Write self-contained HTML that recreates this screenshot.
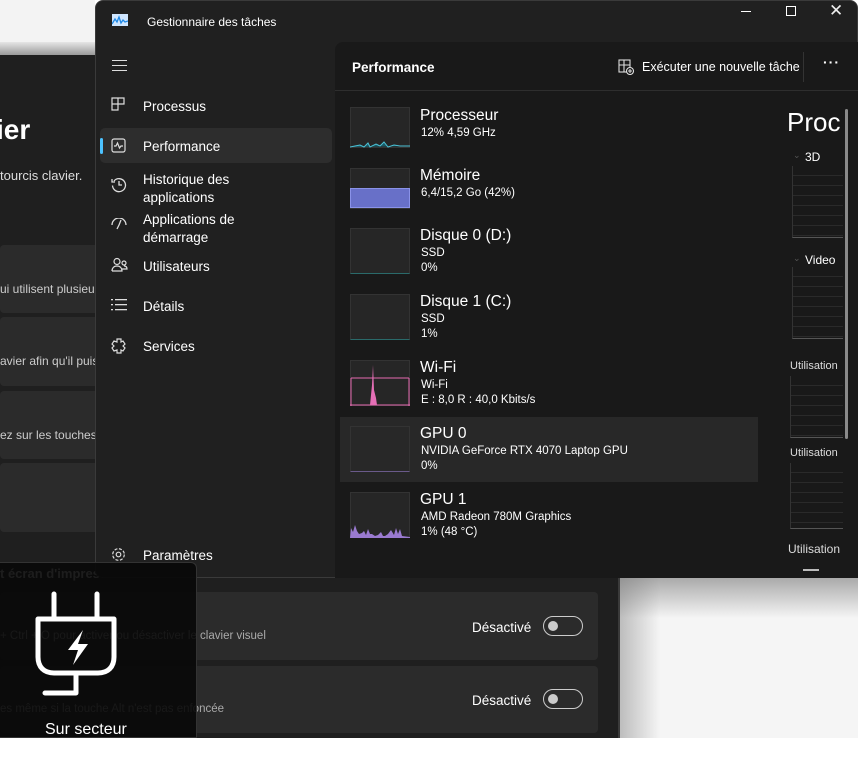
<!DOCTYPE html>
<html><head><meta charset="utf-8"><style>
*{margin:0;padding:0;box-sizing:border-box}
body{width:858px;height:783px;overflow:hidden;background:#fff;font-family:"Segoe UI","Liberation Sans",sans-serif;color:#fff;position:relative}
.abs{position:absolute}
.set{left:0;top:55px;width:620px;height:683px;background:#1f1f1f;border-right:2px solid #3a3a3a}
.card{position:absolute;left:0;background:#2b2b2b;border-radius:4px}
.t{position:absolute;white-space:nowrap}
.tm{left:95px;top:0;width:763px;height:578px;background:#202020;border-radius:8px;border:1px solid #3a3a3a}
.panel{left:335px;top:42px;width:523px;height:536px;background:#191919;border-top-left-radius:8px}
.nav{position:absolute;left:47px;font-size:13.5px;color:#fff}
.ic{position:absolute;left:15px}
.g{position:absolute;left:350px;width:60px;background:#262626;border:1px solid #333}
.name{position:absolute;left:420px;font-size:15.5px}
.sub{position:absolute;left:421px;font-size:11.5px;line-height:15px}
.tog{position:absolute;width:40px;height:20px;border:1px solid #ccc;border-radius:10px}
.tog::after{content:"";position:absolute;left:4px;top:4px;width:10px;height:10px;border-radius:50%;background:#ccc}
.grid{position:absolute;border-left:1px solid #333;border-bottom:1px solid #555;background:repeating-linear-gradient(transparent 0 9px,#2a2a2a 9px 10px)}
</style></head><body>
<div class="abs" style="left:0;top:0;width:95px;height:42px;background:#f3f3f3"></div>
<div class="abs" style="left:0;top:42px;width:95px;height:13px;background:linear-gradient(#e6e6e6,#9a9a9a)"></div>
<div class="abs" style="left:620px;top:578px;width:238px;height:160px;background:linear-gradient(90deg,#bdbdbd,#f5f5f5 40px);"></div>
<div class="abs" style="left:620px;top:578px;width:238px;height:40px;background:linear-gradient(rgba(120,120,120,.6),rgba(245,245,245,0))"></div>
<div class="abs set">
 <div class="t" style="left:-4px;top:59px;font-size:28px;font-weight:600">ier</div>
 <div class="t" style="left:0;top:113px;font-size:13px;color:#ddd">tourcis clavier.</div>
 <div class="card" style="top:190px;width:100px;height:68px"></div>
 <div class="t" style="left:0;top:227px;font-size:12px;color:#ccc">ui utilisent plusieurs</div>
 <div class="card" style="top:262px;width:100px;height:69px"></div>
 <div class="t" style="left:0;top:299px;font-size:12px;color:#ccc">avier afin qu'il puisse</div>
 <div class="card" style="top:336px;width:100px;height:68px"></div>
 <div class="t" style="left:0;top:373px;font-size:12px;color:#ccc">ez sur les touches</div>
 <div class="card" style="top:408px;width:100px;height:69px"></div>
 <div class="t" style="left:0;top:511px;font-size:13px;font-weight:600;color:#ddd">t écran d'impression</div>
 <div class="card" style="top:537px;width:598px;height:68px"></div>
 <div class="t" style="left:0;top:575px;font-size:11.5px;color:#aaa">+ Ctrl + O pour activer ou désactiver le clavier visuel</div>
 <div class="t" style="left:472px;top:565px;font-size:13.5px">Désactivé</div>
 <div class="tog" style="left:543px;top:561px"></div>
 <div class="card" style="top:611px;width:598px;height:67px"></div>
 <div class="t" style="left:0;top:648px;font-size:11.5px;color:#aaa">es même si la touche Alt n'est pas enfoncée</div>
 <div class="t" style="left:472px;top:638px;font-size:13.5px">Désactivé</div>
 <div class="tog" style="left:543px;top:634px"></div>
</div>
<div class="abs tm">
 <svg class="abs" style="left:16px;top:13px" width="16" height="12"><rect width="16" height="12" fill="#cfe6ff"/><polyline points="0,10 3,5 5,8 7,3 9,9 11,6 13,8 16,7" fill="none" stroke="#1e88e5" stroke-width="1.3"/></svg>
 <div class="t" style="left:51px;top:14px;font-size:12px">Gestionnaire des tâches</div>
 <div class="abs" style="left:645px;top:10px;width:10px;height:1px;background:#fff"></div>
 <div class="abs" style="left:690px;top:5px;width:10px;height:10px;border:1px solid #fff"></div>
 <div class="t" style="left:733px;top:0;font-size:17px;color:#eee">✕</div>
 <div class="abs" style="left:16px;top:59px;width:15px;height:11px;border-top:1px solid #ddd;border-bottom:1px solid #ddd"><div style="margin-top:4px;height:1px;background:#ddd"></div></div>
 <div class="abs" style="left:4px;top:127px;width:232px;height:35px;background:#2d2d2d;border-radius:5px"></div>
 <div class="abs" style="left:4px;top:137px;width:3px;height:16px;background:#4cc2ff;border-radius:2px"></div>
 <svg class="ic" style="top:96px" width="14" height="14" fill="none" stroke="#ddd" stroke-width="1.2"><path d="M1 1h6v12H1zM7 1h6v6H7zM1 7h6"/></svg>
 <div class="nav" style="top:98px">Processus</div>
 <svg class="ic" style="top:137px" width="15" height="15" fill="none" stroke="#ddd" stroke-width="1.2"><rect x="1" y="1" width="13" height="13" rx="2"/><path d="M3 8h2l1.5-3 2 5 1.5-2h2"/></svg>
 <div class="nav" style="top:138px">Performance</div>
 <svg class="ic" style="top:176px" width="16" height="16" fill="none" stroke="#ddd" stroke-width="1.3"><path d="M3 4A6.5 6.5 0 1 1 1.5 8.5M1 2v3h3M8 4v4h3"/></svg>
 <div class="nav" style="top:170px;line-height:18px">Historique des<br>applications</div>
 <svg class="ic" style="top:217px" width="16" height="12" fill="none" stroke="#ddd" stroke-width="1.3"><path d="M1 7a7 7 0 0 1 14 0M8 7l2-5M6 11l2-4"/></svg>
 <div class="nav" style="top:210px;line-height:18px">Applications de<br>démarrage</div>
 <svg class="ic" style="top:256px" width="17" height="16" fill="none" stroke="#ddd" stroke-width="1.2"><circle cx="6" cy="4.5" r="3"/><circle cx="13" cy="6" r="2"/><path d="M1 14c0-3 2-5 5-5s5 2 5 5H1M11 12h5c0-2-1-3-3-3"/></svg>
 <div class="nav" style="top:258px">Utilisateurs</div>
 <svg class="ic" style="top:298px" width="16" height="12" fill="#ddd"><rect x="0" y="0" width="2" height="1.3"/><rect x="4" y="0" width="12" height="1.3"/><rect x="0" y="5" width="2" height="1.3"/><rect x="4" y="5" width="12" height="1.3"/><rect x="0" y="10" width="2" height="1.3"/><rect x="4" y="10" width="12" height="1.3"/></svg>
 <div class="nav" style="top:298px">Détails</div>
 <svg class="ic" style="top:337px" width="16" height="16" fill="none" stroke="#ddd" stroke-width="1.2"><path d="M6 1h4v3l2-1 2 3-2 2 2 2-2 3-2-1v3H6v-3l-3 1-2-3 2-2-2-2 2-3 3 1z"/></svg>
 <div class="nav" style="top:338px">Services</div>
 <svg class="ic" style="top:546px" width="15" height="15" fill="none" stroke="#ddd" stroke-width="1.2"><circle cx="7.5" cy="7.5" r="2.3"/><circle cx="7.5" cy="7.5" r="5.8" stroke-dasharray="3 1.6"/></svg>
 <div class="nav" style="top:547px">Paramètres</div>
</div>
<div class="abs panel">
 <div class="abs" style="left:0;top:48px;width:523px;height:1px;background:#2e2e2e"></div>
 <div class="t" style="left:17px;top:18px;font-size:13.5px;font-weight:600">Performance</div>
 <svg class="abs" style="left:283px;top:17px" width="16" height="16" fill="none" stroke="#ddd" stroke-width="1.1"><rect x="1" y="1" width="11" height="12"/><path d="M1 6h11M6 1v12"/><circle cx="12" cy="12" r="3.5" fill="#191919"/><path d="M12 10v4M10 12h4"/></svg>
 <div class="t" style="left:307px;top:18px;font-size:12.5px">Exécuter une nouvelle tâche</div>
 <div class="abs" style="left:468px;top:10px;width:1px;height:30px;background:#333"></div>
 <div class="t" style="left:488px;top:12px;font-size:14px;letter-spacing:1px;font-weight:700">···</div>
 <div class="t" style="left:452px;top:65px;font-size:26px">Proc</div>
 <div class="abs" style="left:510px;top:67px;width:3px;height:330px;background:#8a8a8a;border-radius:2px"></div>
</div>
<div class="abs" style="left:340px;top:417px;width:418px;height:65px;background:#282828"></div>
<div class="g" style="top:107px;height:41px"></div>
<svg class="abs" style="left:350px;top:140px" width="60" height="8"><polyline points="0,7 5,6 10,5 14,7 18,3 20,7 26,4 30,6 34,2 38,7 44,5 50,6 60,6" fill="#1a5a66" stroke="#4cc2d6" stroke-width="1"/></svg>
<div class="name" style="top:107px">Processeur</div><div class="sub" style="top:126px">12%  4,59 GHz</div>
<div class="g" style="top:168px;height:41px"></div>
<div class="abs" style="left:350px;top:188px;width:60px;height:20px;background:#6870c8;border:1px solid #8a92e8"></div>
<div class="name" style="top:167px">Mémoire</div><div class="sub" style="top:186px">6,4/15,2 Go (42%)</div>
<div class="g" style="top:228px;height:46px;border-bottom-color:#2a6a6a"></div>
<div class="name" style="top:227px">Disque 0 (D:)</div><div class="sub" style="top:246px">SSD<br>0%</div>
<div class="g" style="top:294px;height:46px;border-bottom-color:#2a6a6a"></div>
<div class="name" style="top:293px">Disque 1 (C:)</div><div class="sub" style="top:312px">SSD<br>1%</div>
<div class="g" style="top:360px;height:46px"></div>
<svg class="abs" style="left:350px;top:360px" width="60" height="46" fill="none"><path d="M1 18h58M1 18v28M59 18v28" stroke="#e66ab0"/><path d="M20 45 L22 25 L23 5 L24 30 L26 38 L27 45Z" fill="#e56fb6"/><path d="M0 45h60" stroke="#e66ab0"/></svg>
<div class="name" style="top:359px">Wi-Fi</div><div class="sub" style="top:378px">Wi-Fi<br>E : 8,0 R : 40,0 Kbits/s</div>
<div class="g" style="top:426px;height:46px;background:#282828;border-bottom-color:#6a5a8a"></div>
<div class="name" style="top:425px">GPU 0</div><div class="sub" style="top:444px">NVIDIA GeForce RTX 4070 Laptop GPU<br>0%</div>
<div class="g" style="top:492px;height:46px"></div>
<svg class="abs" style="left:350px;top:522px" width="60" height="16"><polygon points="0,16 1,6 3,10 5,3 7,9 9,12 12,11 14,9 16,13 18,7 20,12 22,12 25,14 28,13 31,10 33,14 35,14 38,12 41,8 44,13 46,6 48,12 50,7 52,14 60,15 60,16" fill="#9a7ad0"/></svg>
<div class="name" style="top:491px">GPU 1</div><div class="sub" style="top:510px">AMD Radeon 780M Graphics<br>1%  (48 °C)</div>
<div class="t" style="left:793px;top:150px;font-size:9px;color:#555">⌄</div>
<div class="t" style="left:805px;top:150px;font-size:12px">3D</div>
<div class="grid" style="left:792px;top:166px;width:51px;height:72px"></div>
<div class="t" style="left:793px;top:253px;font-size:9px;color:#555">⌄</div>
<div class="t" style="left:805px;top:253px;font-size:12px">Video</div>
<div class="grid" style="left:792px;top:267px;width:51px;height:72px"></div>
<div class="t" style="left:790px;top:360px;font-size:11px;color:#ddd">Utilisation</div>
<div class="grid" style="left:790px;top:376px;width:53px;height:62px"></div>
<div class="t" style="left:790px;top:447px;font-size:11px;color:#ddd">Utilisation</div>
<div class="grid" style="left:790px;top:463px;width:53px;height:66px"></div>
<div class="t" style="left:788px;top:542px;font-size:12px;color:#ddd">Utilisation</div>
<div class="abs" style="left:803px;top:569px;width:16px;height:2px;background:#bbb"></div>
<div class="abs" style="left:0;top:562px;width:197px;height:176px;background:rgba(8,8,8,.9);border:1px solid #333;border-left:none;border-radius:0 6px 0 0"></div>
<svg class="abs" style="left:30px;top:590px" width="92" height="108" fill="none" stroke="#fff" stroke-width="5" stroke-linecap="round" stroke-linejoin="round"><path d="M24 4v24M67 4v24M8 29h76v38c0 10-6 16-16 16H24C14 83 8 77 8 67z"/><path d="M46 83v20H15"/><polygon points="53,40 38,60 48,60 43,75 58,54 48,54" fill="#fff" stroke="none"/></svg>
<div class="t" style="left:45px;top:721px;font-size:16px">Sur secteur</div>
</body></html>
